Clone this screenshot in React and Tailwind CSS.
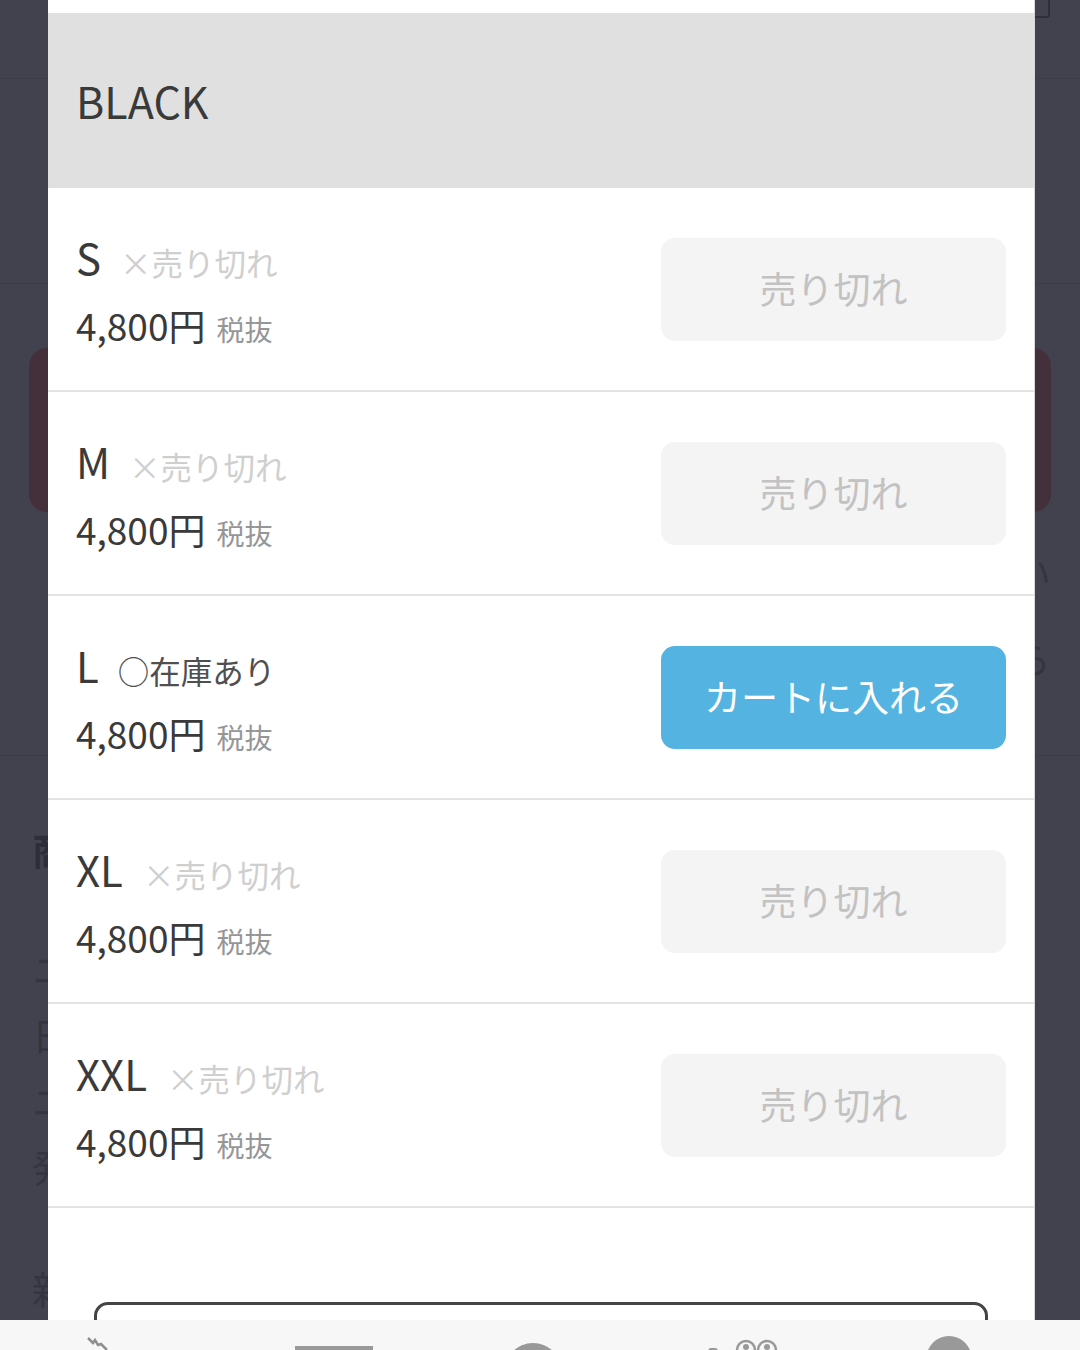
const font = { fontFamily: '"Noto Sans CJK JP", "Noto Sans", sans-serif' };

const rows = [
  { size: "S", gap: "ml-[19px]", stock: false },
  { size: "M", gap: "ml-[19px]", stock: false },
  { size: "L", gap: "ml-[19px]", stock: true },
  { size: "XL", gap: "ml-[20px]", stock: false },
  { size: "XXL", gap: "ml-[20px]", stock: false },
];

function Row({ size, gap, stock }) {
  return (
    <div className="h-[204px] border-b-2 border-[#e3e3e3] flex items-center justify-between px-[28px]">
      <div className="flex flex-col pt-[4px]">
        <div className="flex items-center h-[64px]">
          <span className="text-[42px] leading-none font-normal text-[#3a3a3a]">{size}</span>
          <span className={`${gap} text-[31.5px] leading-none font-normal mt-[11px] whitespace-nowrap ${stock ? "text-[#4f4f4f]" : "text-[#cfcfcf]"}`}>
            {stock ? "○在庫あり" : "×売り切れ"}
          </span>
        </div>
        <div className="flex items-center h-[64px] mt-[4px]">
          <span className="text-[37px] leading-none font-normal text-[#3a3a3a] whitespace-nowrap">4,800円</span>
          <span className="ml-[11px] text-[28px] leading-none font-normal text-[#969696] mt-[7px] whitespace-nowrap">税抜</span>
        </div>
      </div>
      <button className={`w-[345px] h-[103px] rounded-[14px] text-[37px] font-normal flex items-center justify-center ${stock ? "bg-[#54b3e0] text-white" : "bg-[#f4f4f4] text-[#c2c2c2]"}`}>
        {stock ? "カートに入れる" : "売り切れ"}
      </button>
    </div>
  );
}

const edgeLine = "h-[66px] flex items-center whitespace-nowrap overflow-hidden";

function Backdrop() {
  return (
    <div className="h-[1350px] bg-[#42424e] overflow-hidden text-[#35353f] text-[38px] leading-none">
      <div className="h-[79px] border-b border-[#3c3c47] flex justify-end items-start pr-[30px]">
        <div className="w-[20px] h-[18px] border-2 border-t-0 border-[#2f2f38] rounded-b-[3px]" />
      </div>
      <div className="h-[205px] border-b border-[#3c3c47]" />
      <div className="px-[29px] pt-[64px]">
        <div className="h-[164px] rounded-[18px] bg-[#43303b]" />
        <div className="mt-[39px] h-[204px] flex flex-col items-end">
          <div className="h-[42px] flex items-center">い</div>
          <div className="mt-[44px] h-[42px] flex items-center">ら</div>
        </div>
      </div>
      <div className="border-t border-[#3c3c47] px-[32px] pt-[72px]">
        <div className="font-bold text-[#2e2e38] h-[42px] flex items-center">商</div>
        <div className="mt-[65px]">
          <div className={edgeLine}>ニ</div>
          <div className={edgeLine}>日</div>
          <div className={edgeLine}>ニ</div>
          <div className={edgeLine}>発</div>
        </div>
        <div className="mt-[68px] h-[42px] flex items-center">新</div>
      </div>
    </div>
  );
}

function NavIcons() {
  return (
    <svg className="block" width="1080" height="30" viewBox="0 0 1080 30" fill="#999999">
      <path d="M88 18 L93 23 L95 20 L98 25 L101 24 L107 30" fill="none" stroke="#8f8f8f" strokeWidth="2.5" />
      <rect x="295" y="26" width="78" height="4" />
      <circle cx="533" cy="52" r="29" />
      <path d="M708 30 L710 28 L716 28 L718 30 Z" />
      <circle cx="746" cy="30" r="9" fill="none" stroke="#999999" strokeWidth="2.5" />
      <circle cx="767" cy="30" r="9" fill="none" stroke="#999999" strokeWidth="2.5" />
      <circle cx="746" cy="27" r="3" />
      <circle cx="767" cy="27" r="3" />
      <circle cx="949" cy="38.75" r="22.75" />
    </svg>
  );
}

export default function App() {
  return (
    <div className="relative w-[1080px] h-[1350px] overflow-hidden" style={font}>
      <Backdrop />
      <div className="absolute left-[48px] top-0 w-[987px] h-[1320px] bg-white overflow-hidden border-r border-[#d8d8d8]">
        <div className="mt-[13px] h-[175px] bg-[#e0e0e0] flex items-center pl-[28px]">
          <span className="text-[43px] leading-none font-normal text-[#3a3a3a]">BLACK</span>
        </div>
        {rows.map((r) => (
          <Row key={r.size} {...r} />
        ))}
        <div className="mt-[94px] mx-[46px] h-[60px] rounded-[14px] border-[3px] border-[#444444]" />
      </div>
      <div className="absolute left-0 right-0 bottom-0 h-[30px] bg-[#f7f7f7]">
        <NavIcons />
      </div>
    </div>
  );
}
